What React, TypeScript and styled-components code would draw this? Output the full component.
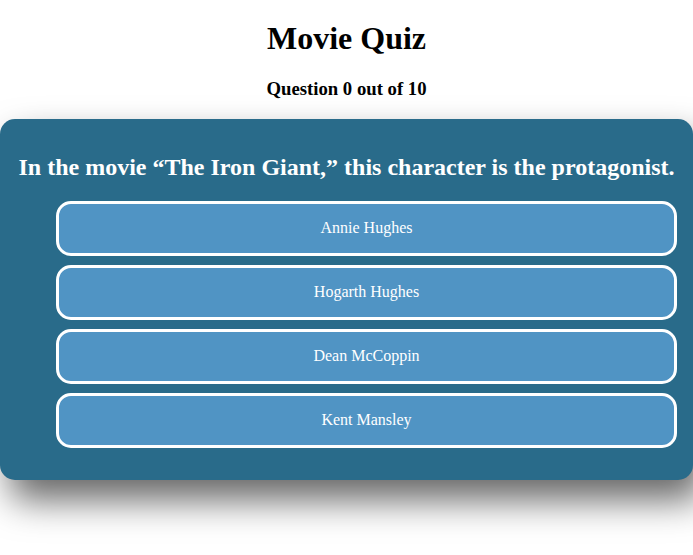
import React from "react";
import styled, { createGlobalStyle } from "styled-components";

const GlobalStyle = createGlobalStyle`
  html, body {
    margin: 0;
    padding: 0;
    background: #ffffff;
  }
  body {
    font-family: "Liberation Serif", "Times New Roman", serif;
    color: #000000;
  }
  * { box-sizing: border-box; }
`;

const Page = styled.div`
  text-align: center;
  min-height: 555px;
  padding-bottom: 60px;
`;

const Title = styled.h1`
  font-size: 32px;
  line-height: 1.107;
  font-weight: bold;
  margin: 21.44px 0;
`;

const Progress = styled.h3`
  font-size: 18.72px;
  line-height: 1.15;
  font-weight: bold;
  margin: 18.72px 0;
`;

const Card = styled.section`
  width: 100%;
  background-color: #296b8a;
  border-radius: 15px;
  padding: 16px;
  box-shadow: 10px 20px 36px 0px rgba(0, 0, 0, 0.6);
`;

const Question = styled.h2`
  color: #ffffff;
  font-size: 24px;
  line-height: 1.107;
  font-weight: bold;
  margin: 19.92px 0;
`;

const AnswerList = styled.ul`
  list-style: none;
  margin: 16px 0;
  padding: 0 0 0 40px;
  display: flex;
  flex-direction: column;
  gap: 9px;
`;

const AnswerButton = styled.button`
  width: 100%;
  height: 55px;
  background-color: #5094c4;
  border: 3px solid #ffffff;
  border-radius: 15px;
  color: #ffffff;
  font-family: "Liberation Serif", "Times New Roman", serif;
  font-size: 16px;
  cursor: pointer;
  display: flex;
  align-items: center;
  justify-content: center;
`;

const answers = ["Annie Hughes", "Hogarth Hughes", "Dean McCoppin", "Kent Mansley"];

export default function App() {
  return (
    <Page>
      <GlobalStyle />
      <Title>Movie Quiz</Title>
      <Progress>Question 0 out of 10</Progress>
      <Card>
        <Question>In the movie “The Iron Giant,” this character is the protagonist.</Question>
        <AnswerList>
          {answers.map((a) => (
            <li key={a}>
              <AnswerButton>{a}</AnswerButton>
            </li>
          ))}
        </AnswerList>
      </Card>
    </Page>
  );
}
